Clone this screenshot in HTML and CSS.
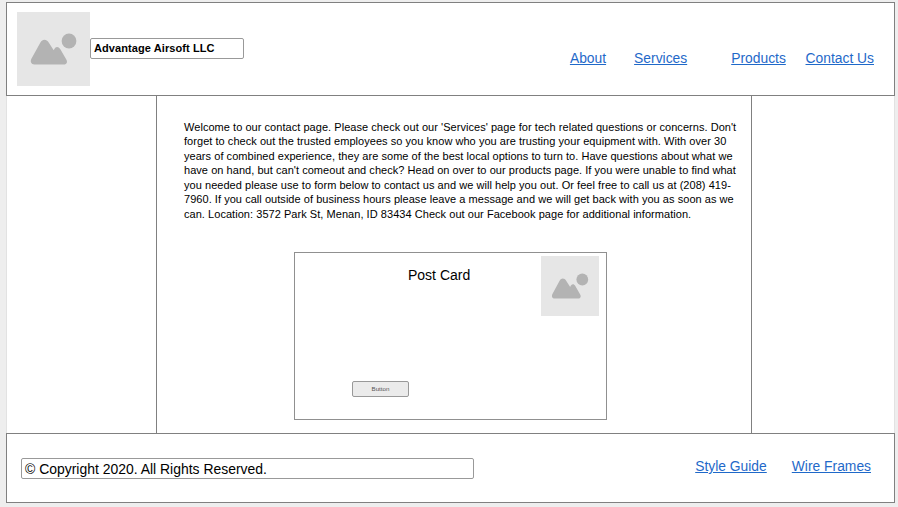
FILE: index.html
```html
<!DOCTYPE html>
<html lang="en">
<head>
<meta charset="utf-8">
<title>Advantage Airsoft LLC</title>
<link rel="stylesheet" href="styles.css">
</head>
<body>
<div class="page">
  <header class="header">
    <svg class="logo" viewBox="0 0 73 74" preserveAspectRatio="none" aria-hidden="true">
      <rect width="73" height="74" fill="#e6e6e6"/>
      <circle cx="52" cy="29" r="7.4" fill="#b3b3b3"/>
      <path d="M17.500 52.500C14 52.500 13 49.500 14.400 46.800L23.400 30.500C25.500 26.800 29.500 26.800 31.700 30.500L36.700 38.300C38.200 34.200 41.200 33.800 43.200 37L49.300 47.500C50.800 50 49.700 52.500 47 52.500Z" fill="#b3b3b3"/>
    </svg>
    <div class="brand">Advantage Airsoft LLC</div>
    <nav class="nav">
      <a class="about" href="#">About</a>
      <a class="services" href="#">Services</a>
      <a class="products" href="#">Products</a>
      <a href="#">Contact Us</a>
    </nav>
  </header>
  <main class="main">
    <p class="intro">Welcome to our contact page. Please check out our 'Services' page for tech related questions or concerns. Don't<br>forget to check out the trusted employees so you know who you are trusting your equipment with. With over 30<br>years of combined experience, they are some of the best local options to turn to. Have questions about what we<br>have on hand, but can't comeout and check? Head on over to our products page. If you were unable to find what<br>you needed please use to form below to contact us and we will help you out. Or feel free to call us at (208) 419-<br>7960. If you call outside of business hours please leave a message and we will get back with you as soon as we<br>can. Location: 3572 Park St, Menan, ID 83434 Check out our Facebook page for additional information.</p>
    <section class="card">
      <div class="card-body">
        <h2>Post Card</h2>
        <button type="button">Button</button>
      </div>
      <svg class="thumb" viewBox="0 0 73 74" preserveAspectRatio="none" aria-hidden="true">
        <rect width="73" height="74" fill="#e6e6e6"/>
        <circle cx="52" cy="29" r="7.4" fill="#b3b3b3"/>
        <path d="M17.500 52.500C14 52.500 13 49.500 14.400 46.800L23.400 30.500C25.500 26.800 29.500 26.800 31.700 30.500L36.700 38.300C38.200 34.200 41.200 33.800 43.200 37L49.300 47.500C50.800 50 49.700 52.500 47 52.500Z" fill="#b3b3b3"/>
      </svg>
    </section>
  </main>
  <footer class="footer">
    <div class="copyright">© Copyright 2020. All Rights Reserved.</div>
    <nav class="footer-nav">
      <a href="#">Style Guide</a>
      <a href="#">Wire Frames</a>
    </nav>
  </footer>
</div>
</body>
</html>
```

FILE: styles.css
```css
* { box-sizing: border-box; }
body {
  margin: 0;
  padding: 2px 3px 4px 6px;
  height: 507px;
  overflow: hidden;
  background: #eee;
  font-family: "Liberation Sans", Arial, sans-serif;
  color: #000;
}
.page { background: #fff; width: 889px; box-shadow: inset 1px 0 #e2e2e2, inset -1px 0 #e2e2e2; }
.header {
  height: 94px;
  border: 1px solid #808080;
  display: flex;
  align-items: flex-start;
  padding: 9px 20px 0 10px;
}
.logo { display: block; width: 73px; height: 74px; }
.brand {
  width: 154px;
  height: 21px;
  margin-top: 26px;
  padding-left: 3px;
  border: 1px solid #999;
  border-radius: 2px;
  font-weight: bold;
  font-size: 11px;
  letter-spacing: 0.09px;
  line-height: 19px;
  white-space: nowrap;
}
a { color: #1f69c9; text-decoration: underline; font-size: 13.85px; line-height: 16px; white-space: nowrap; }
.nav { display: flex; margin: 38px 0 0 auto; }
.about { margin-right: 28px; }
.services { margin-right: 44px; }
.products { margin-right: 19.7px; }
.main {
  width: 596px;
  height: 339px;
  margin: -1px 0 0 150px;
  border: 1px solid #808080;
  padding: 24px 0 0 27px;
}
.intro {
  margin: 0;
  font-size: 11px;
  line-height: 14.45px;
  letter-spacing: 0.045px;
  white-space: nowrap;
}
.card {
  width: 313px;
  height: 168px;
  margin: 31px 0 0 110px;
  border: 1px solid #909090;
  display: flex;
  padding: 3px 7px 0 57px;
  justify-content: space-between;
}
.card-body { display: flex; flex-direction: column; justify-content: space-between; height: 141px; }
.card h2 { margin: 11px 0 0 56px; font-size: 14px; font-weight: normal; line-height: 16px; }
.card button {
  width: 57px;
  height: 16px;
  padding: 0;
  border: 1px solid #999;
  border-radius: 2px;
  background: #ebebeb;
  color: #555;
  font: 6.2px/14px "Liberation Sans", Arial, sans-serif;
}
.thumb { display: block; width: 58px; height: 60px; }
.footer {
  height: 70px;
  margin-top: -1px;
  border: 1px solid #808080;
  display: flex;
  justify-content: space-between;
  padding: 24px 23px 0 14px;
}
.copyright {
  width: 453px;
  height: 21px;
  border: 1px solid #999;
  border-radius: 2px;
  padding-left: 3px;
  font-size: 13.95px;
  line-height: 20px;
  white-space: nowrap;
}
.footer-nav { display: flex; gap: 25px; }
```
